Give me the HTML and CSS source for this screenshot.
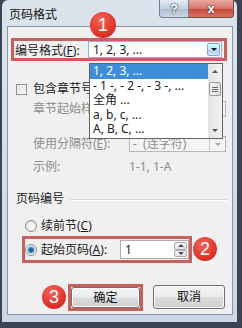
FILE: index.html
```html
<!DOCTYPE html>
<html lang="zh-CN">
<head>
    <meta charset="UTF-8">
    <meta name="viewport" content="width=device-width, initial-scale=1.0">
    <title>页码格式</title>
    <link rel="stylesheet" href="styles.css">
</head>
<body>
    <div class="window">
        <div class="titlebar">
            <span class="title">页码格式</span>
            <div class="caption">
                <span class="cap-btn cap-help">?</span>
                <span class="cap-btn cap-close">x</span>
            </div>
        </div>
        <div class="client">
            <div class="mark mark-format">
                <span class="lbl lbl-format">编号格式(<u>F</u>):</span>
                <div class="combo combo-format">
                    <span class="combo-text">1, 2, 3, ...</span>
                    <span class="combo-btn"><i class="tri-down"></i></span>
                </div>
            </div>
            <div class="row row-chapter">
                <span class="checkbox"></span>
                <span>包含章节号(<u>N</u>)</span>
            </div>
            <div class="row row-indent row-style disabled">
                <span class="lbl lbl-wide">章节起始样式(<u>P</u>):</span>
                <div class="combo combo-small">
                    <span class="combo-text">标题 1</span>
                    <span class="combo-btn flat"><i class="tri-down"></i></span>
                </div>
            </div>
            <div class="row row-indent row-sep disabled">
                <span class="lbl lbl-wide">使用分隔符(<u>E</u>):</span>
                <div class="combo combo-small">
                    <span class="combo-text">-&nbsp;&nbsp;(连字符)</span>
                    <span class="combo-btn flat"><i class="tri-down"></i></span>
                </div>
            </div>
            <div class="row row-indent row-example disabled">
                <span class="lbl lbl-wide">示例:</span>
                <span>1-1, 1-A</span>
            </div>
            <div class="row group-head">
                <span>页码编号</span>
                <span class="group-line"></span>
            </div>
            <div class="row row-continue">
                <span class="radio"></span>
                <span>续前节(<u>C</u>)</span>
            </div>
            <div class="mark mark-start">
                <span class="radio checked"></span>
                <span class="lbl lbl-start">起始页码(<u>A</u>):</span>
                <div class="spin">
                    <span class="spin-text">1</span>
                    <span class="spin-btns">
                        <span class="spin-btn"><i class="tri-up"></i></span>
                        <span class="spin-btn"><i class="tri-down"></i></span>
                    </span>
                </div>
            </div>
            <div class="row buttons">
                <div class="mark mark-ok">
                    <span class="btn btn-ok">确定</span>
                </div>
                <span class="btn btn-cancel">取消</span>
            </div>

            <div class="droplist">
                <div class="drop-items">
                    <div class="drop-item selected">1, 2, 3, ...</div>
                    <div class="drop-item">- 1 -, - 2 -, - 3 -, ...</div>
                    <div class="drop-item">全角 ...</div>
                    <div class="drop-item">a, b, c, ...</div>
                    <div class="drop-item">A, B, C, ...</div>
                </div>
                <div class="scrollbar">
                    <span class="sb-arrow"><i class="tri-up"></i></span>
                    <span class="sb-thumb"><i class="grip"></i></span>
                    <span class="sb-space"></span>
                    <span class="sb-arrow"><i class="tri-down"></i></span>
                </div>
            </div>
        </div>

        <span class="badge badge-1">1</span>
        <span class="badge badge-2">2</span>
        <span class="badge badge-3">3</span>
    </div>
</body>
</html>
```

FILE: styles.css
```css
body {
    margin: 0;
    width: 242px;
    height: 328px;
    overflow: hidden;
    background: #3b4452;
    font-family: "Noto Sans", "Noto Sans CJK SC", sans-serif;
    font-size: 12px;
    color: #1a1a1a;
}
u {
    text-decoration-thickness: 1px;
    text-underline-offset: 1px;
}
.window {
    position: relative;
    margin-left: 2px;
    width: 235px;
    height: 322px;
    box-sizing: border-box;
    padding: 0 4px 7px 5px;
    background: linear-gradient(#dbe3ed, #cdd7e3);
    border-radius: 6px 6px 0 0;
    display: flex;
    flex-direction: column;
}
.titlebar {
    height: 26px;
    flex-shrink: 0;
    display: flex;
    align-items: flex-start;
}
.title {
    margin: 8px 0 0 2px;
    line-height: 14px;
    color: #111;
}
.caption {
    margin-left: auto;
    margin-right: -1px;
    display: flex;
}
.cap-btn {
    height: 18px;
    box-sizing: border-box;
    display: flex;
    align-items: center;
    justify-content: center;
    color: #fff;
    font: bold 13px "Liberation Sans", sans-serif;
    text-shadow: 0 0 2px #233, 0 0 1px #233;
    border: 1px solid #6f7f92;
    border-top: none;
}
.cap-help {
    width: 30px;
    border-radius: 0 0 0 4px;
    background: linear-gradient(#e6edf5, #c2cfdd 50%, #aebdcf 51%, #c9d6e4);
}
.cap-close {
    width: 45px;
    border-left: none;
    border-color: #7a4a48;
    border-radius: 0 0 4px 0;
    background: linear-gradient(#e9a99f, #d6766b 50%, #c7463b 51%, #d8735f);
}
.client {
    flex: 1;
    position: relative;
    background: #f0f0f0;
    border: 1px solid #8896a8;
    display: flex;
    flex-direction: column;
}
.row {
    display: flex;
    align-items: center;
    height: 14px;
    line-height: 14px;
    white-space: nowrap;
}
.disabled {
    color: #8d8d8d;
}
.mark {
    border: 3px solid #c8605f;
    box-sizing: border-box;
    display: flex;
    align-items: center;
    white-space: nowrap;
}
.mark-format {
    margin: 11px 0 0 3px;
    width: 216px;
    height: 23px;
    padding-left: 1px;
}
.lbl-format {
    width: 73px;
}
.combo {
    display: flex;
    align-items: center;
    background: #fff;
    border: 1px solid #abadb3;
    box-sizing: border-box;
    line-height: 14px;
}
.combo-format {
    width: 134px;
    height: 17px;
    border-color: #8fb4dc;
}
.combo-text {
    flex: 1;
    padding-left: 4px;
    white-space: nowrap;
}
.combo-btn {
    width: 11px;
    align-self: stretch;
    margin: 1px;
    border: 1px solid #86a9cf;
    border-radius: 2px;
    background: linear-gradient(#eef6fd, #c6e0f6 50%, #a8cdee 51%, #cfe6f8);
    display: flex;
    align-items: center;
    justify-content: center;
}
.combo-btn.flat {
    width: 15px;
    margin: 0;
    border: none;
    border-left: 1px solid #c9c9c9;
    border-radius: 0;
    background: #f4f4f4;
}
.tri-down,
.tri-up {
    width: 0;
    height: 0;
    border-left: 3px solid transparent;
    border-right: 3px solid transparent;
}
.tri-down {
    border-top: 3px solid #111;
}
.tri-up {
    border-bottom: 3px solid #111;
}
.flat .tri-down {
    border-top-color: #a6a6a6;
}
.row-chapter {
    margin: 21px 0 0 8px;
}
.checkbox {
    width: 11px;
    height: 11px;
    box-sizing: border-box;
    margin-right: 6px;
    border: 1px solid #8e8f8f;
    background: linear-gradient(135deg, #dcdcdc, #fbfbfb);
    box-shadow: inset 0 0 0 1px #f4f4f4;
}
.row-indent {
    margin-left: 25px;
}
.lbl-wide {
    width: 96px;
}
.combo-small {
    width: 97px;
    height: 16px;
    background: #f4f4f4;
    border-color: #b7b7b7;
}
.combo-small .combo-text {
    padding-left: 3px;
}
.row-style {
    margin-top: 6px;
}
.row-sep {
    margin-top: 20px;
    height: 16px;
}
.row-example {
    margin-top: 8px;
}
.group-head {
    margin: 18px 5px 0 8px;
}
.group-line {
    flex: 1;
    height: 1px;
    margin-left: 6px;
    background: #d5dbe0;
    box-shadow: 0 1px 0 #fff;
}
.row-continue {
    margin: 13px 0 0 17px;
}
.radio {
    width: 12px;
    height: 12px;
    box-sizing: border-box;
    margin-right: 4px;
    border: 1px solid #8e8f8f;
    border-radius: 50%;
    background: radial-gradient(circle at 60% 60%, #fdfdfd, #d9d9d9);
    flex-shrink: 0;
}
.radio.checked {
    background: radial-gradient(circle, #1f4f86 0, #2c74b4 2px, #6fa7d6 3px, #e8e8e8 4px, #f6f6f6);
}
.mark-start {
    margin: 3px 0 0 14px;
    width: 170px;
    height: 27px;
}
.lbl-start {
    width: 79px;
    line-height: 14px;
}
.spin {
    width: 69px;
    height: 19px;
    box-sizing: border-box;
    display: flex;
    background: #fff;
    border: 1px solid #abadb3;
    line-height: 17px;
}
.spin-text {
    flex: 1;
    padding-left: 4px;
}
.spin-btns {
    width: 13px;
    margin: 1px;
    display: flex;
    flex-direction: column;
}
.spin-btn {
    flex: 1;
    border: 1px solid #a9a9a9;
    border-radius: 2px;
    background: linear-gradient(#fafafa, #e1e1e1);
    display: flex;
    align-items: center;
    justify-content: center;
}
.spin-btn .tri-up {
    border-bottom-color: #4a4a4a;
}
.spin-btn .tri-down {
    border-top-color: #4a4a4a;
}
.buttons {
    height: 27px;
    margin: 21px 0 0 60px;
    align-items: flex-start;
}
.mark-ok {
    width: 75px;
    height: 27px;
}
.btn {
    box-sizing: border-box;
    display: flex;
    align-items: center;
    justify-content: center;
    border: 1px solid #707070;
    border-radius: 3px;
    background: linear-gradient(#f4f4f4, #ebebeb 48%, #dddddd 52%, #cfcfcf);
    box-shadow: inset 0 0 0 1px #fbfbfb;
    color: #111;
}
.btn-ok {
    width: 69px;
    height: 21px;
}
.btn-cancel {
    width: 72px;
    height: 24px;
    margin: 1px 0 0 10px;
}
.droplist {
    position: absolute;
    left: 81px;
    top: 36px;
    width: 134px;
    height: 76px;
    box-sizing: border-box;
    border: 1px solid #646464;
    background: #fff;
    display: flex;
}
.drop-items {
    flex: 1;
    overflow: hidden;
}
.drop-item {
    height: 14.6px;
    line-height: 14.6px;
    padding-left: 3px;
    white-space: nowrap;
}
.drop-item.selected {
    background: #3c8fd6;
    color: #fff;
}
.scrollbar {
    width: 14px;
    display: flex;
    flex-direction: column;
    background: linear-gradient(90deg, #e3e3e3, #f2f2f2);
}
.sb-arrow {
    height: 15px;
    display: flex;
    align-items: center;
    justify-content: center;
}
.sb-arrow .tri-up {
    border-bottom-color: #555;
}
.sb-arrow .tri-down {
    border-top-color: #555;
}
.sb-thumb {
    height: 14px;
    margin: 3px 1px 0;
    box-sizing: border-box;
    border: 1px solid #979797;
    border-radius: 2px;
    background: linear-gradient(90deg, #f6f6f6, #dedede);
    display: flex;
    align-items: center;
    justify-content: center;
}
.grip {
    width: 6px;
    height: 5px;
    background: repeating-linear-gradient(#6a6a6a 0 1px, transparent 1px 2px);
}
.sb-space {
    flex: 1;
}
.badge {
    position: absolute;
    width: 24px;
    height: 24px;
    border-radius: 50%;
    background: radial-gradient(circle at 40% 30%, #f3645a, #de3128 65%, #c9221b);
    color: #fff;
    font: 18px/24px "Liberation Sans", sans-serif;
    text-align: center;
}
.badge-1 {
    left: 88px;
    top: 12px;
    width: 26px;
    height: 26px;
    line-height: 26px;
}
.badge-2 {
    left: 191px;
    top: 237px;
}
.badge-3 {
    left: 40px;
    top: 285px;
}
```
